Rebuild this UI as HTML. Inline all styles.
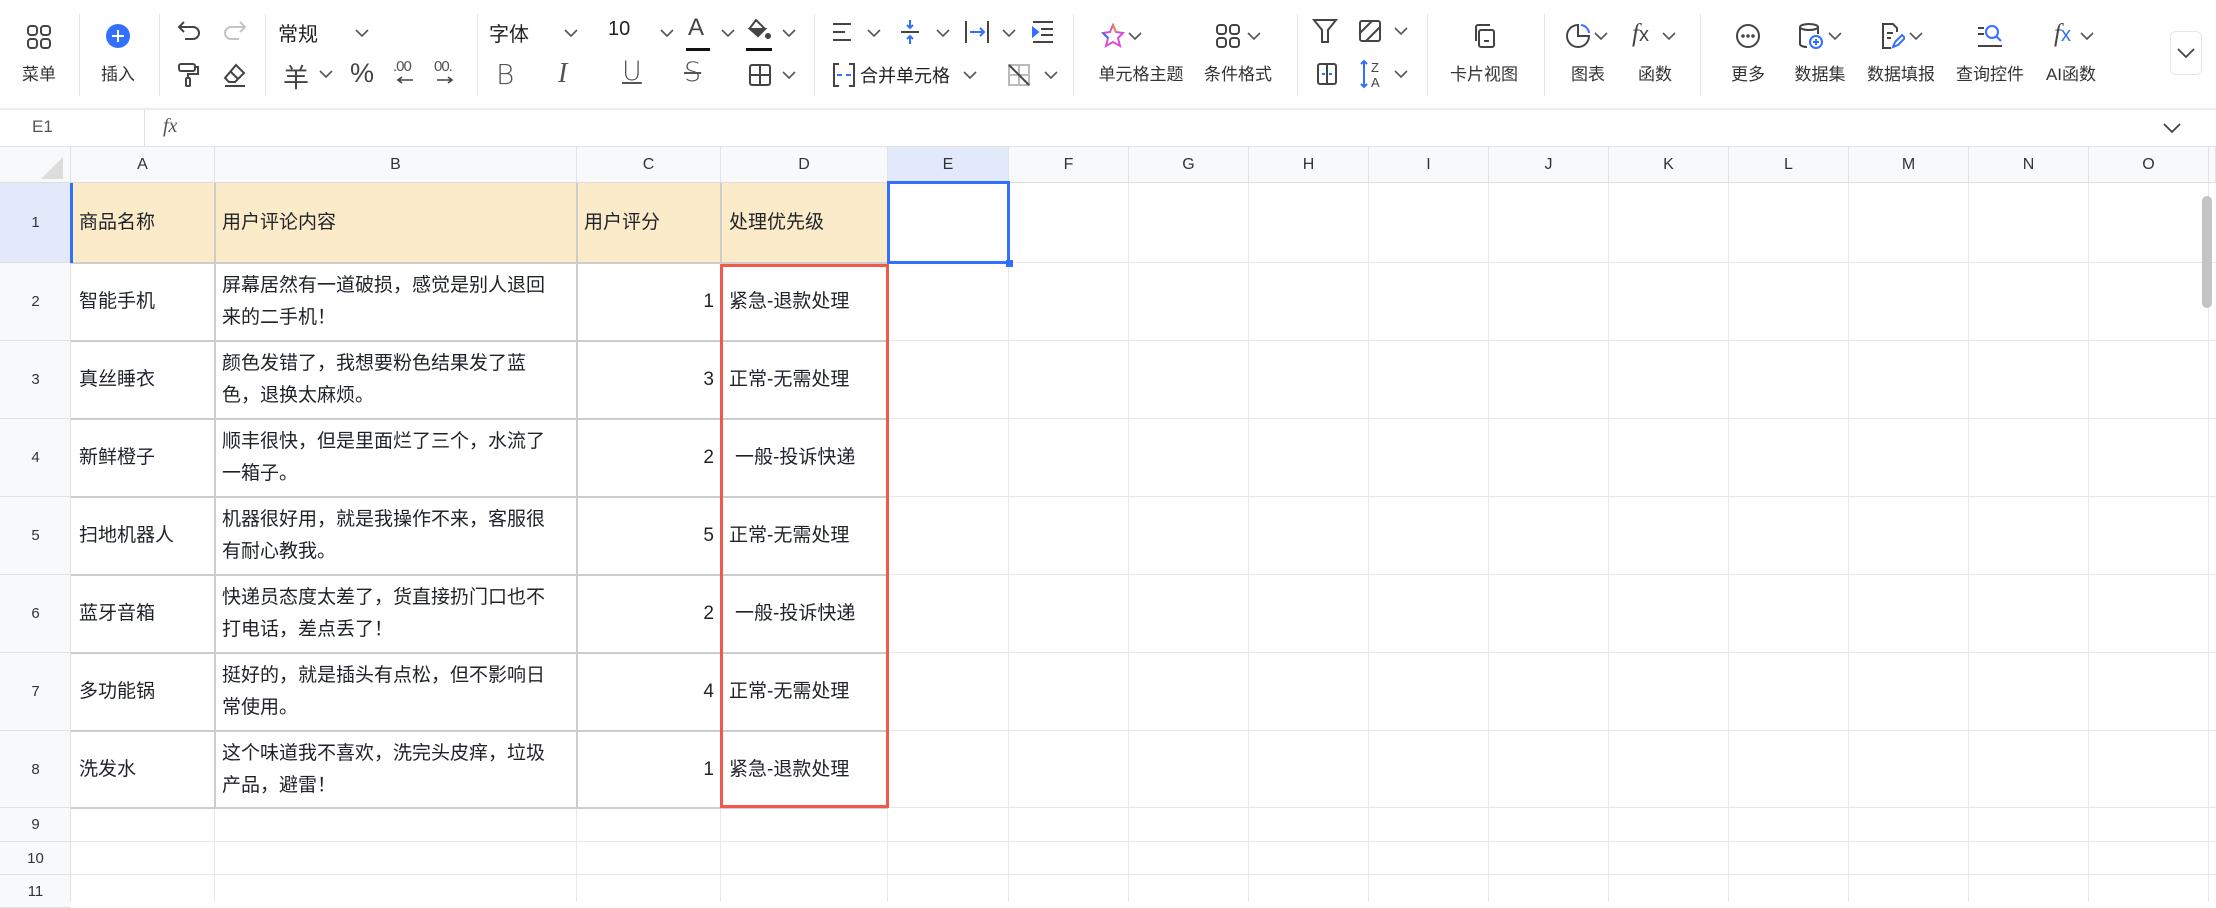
<!DOCTYPE html>
<html><head><meta charset="utf-8"><style>
*{margin:0;padding:0;box-sizing:border-box}
body{width:2216px;height:902px;overflow:hidden;background:#fff;font-family:"Liberation Sans","Noto Sans CJK SC",sans-serif;color:#1f2329;position:relative}
.a{position:absolute}
.lbl{position:absolute;font-size:17px;color:#333;white-space:nowrap;transform:translateX(-50%);top:60px}
.ic{position:absolute;transform:translate(-50%,-50%)}
.sep{position:absolute;top:14px;width:1px;height:82px;background:#e6e6e6}
.ch{position:absolute;top:147px;height:36px;line-height:36px;text-align:center;font-size:16px;color:#333;background:#f8f9fa;border-right:1px solid #e2e2e2}
.rh{position:absolute;left:0;width:71px;text-align:center;font-size:15px;color:#333;background:#f8f9fa;border-bottom:1px solid #e2e2e2}
.vl{position:absolute;top:183px;bottom:0;width:1px;background:#e8e8e8}
.hl{position:absolute;left:71px;right:0;height:1px;background:#e8e8e8}
.c{position:absolute;font-size:19px;color:#1f2329;display:flex;align-items:center;line-height:32px;white-space:nowrap}
</style></head><body>
<div class="a" style="left:0;top:108px;width:2216px;height:2px;background:#ececec"></div>
<div class="sep" style="left:79px"></div><div class="sep" style="left:159px"></div><div class="sep" style="left:265px"></div><div class="sep" style="left:477px"></div><div class="sep" style="left:814px"></div><div class="sep" style="left:1073px"></div><div class="sep" style="left:1297px"></div><div class="sep" style="left:1427px"></div><div class="sep" style="left:1544px"></div><div class="sep" style="left:1700px"></div>

<svg class="ic" style="left:39px;top:37px" width="26" height="26" viewBox="0 0 26 26" fill="none" stroke="#444" stroke-width="2"><rect x="2" y="2" width="9" height="9" rx="3"/><rect x="15" y="2" width="9" height="9" rx="3"/><rect x="2" y="15" width="9" height="9" rx="3"/><rect x="15" y="15" width="9" height="9" rx="3"/></svg>
<div class="lbl" style="left:39px">菜单</div>
<svg class="ic" style="left:118px;top:36px" width="26" height="26" viewBox="0 0 26 26"><circle cx="13" cy="13" r="12" fill="#3370ff"/><path d="M13 7v12M7 13h12" stroke="#fff" stroke-width="2"/></svg>
<div class="lbl" style="left:118px">插入</div>
<svg class="ic" style="left:189px;top:32px" width="26" height="24" viewBox="0 0 26 24" fill="none" stroke="#444" stroke-width="2"><path d="M3 7h14a6 6 0 0 1 0 12H9"/><path d="M8 2L3 7l5 5"/></svg>
<svg class="ic" style="left:235px;top:32px" width="26" height="24" viewBox="0 0 26 24" fill="none" stroke="#c4c4c4" stroke-width="2"><path d="M23 7H9a6 6 0 0 0 0 12h8"/><path d="M18 2l5 5-5 5"/></svg>
<svg class="ic" style="left:189px;top:75px" width="24" height="26" viewBox="0 0 24 26" fill="none" stroke="#444" stroke-width="2"><rect x="2" y="2" width="16" height="7" rx="2"/><path d="M18 5h3v7H11v4"/><rect x="9" y="16" width="4" height="8" rx="1"/></svg>
<svg class="ic" style="left:235px;top:75px" width="26" height="26" viewBox="0 0 26 26" fill="none" stroke="#444" stroke-width="2"><path d="M14 3l8 8-9 9H7l-4-4z"/><path d="M8 9l8 8"/><path d="M3 24h20"/></svg>
<div class="a" style="left:278px;top:18px;font-size:20px;color:#222">常规</div>
<svg class="ic" style="left:362px;top:33px" width="14" height="10" viewBox="0 0 14 10" fill="none" stroke="#555" stroke-width="1.6"><path d="M1 2l6 6 6-6"/></svg>
<div class="a" style="left:283px;top:58px;font-size:26px;color:#444">羊</div>
<svg class="ic" style="left:326px;top:74px" width="14" height="10" viewBox="0 0 14 10" fill="none" stroke="#555" stroke-width="1.6"><path d="M1 2l6 6 6-6"/></svg>
<div class="a" style="left:350px;top:58px;font-size:27px;color:#444">%</div>
<div class="a" style="left:393px;top:58px;font-size:15px;color:#555;letter-spacing:-1px">.00</div>
<svg class="ic" style="left:405px;top:80px" width="20" height="8" viewBox="0 0 20 8" fill="none" stroke="#444" stroke-width="1.6"><path d="M18 4H4M7 1L3 4l4 3"/></svg>
<div class="a" style="left:434px;top:58px;font-size:15px;color:#555;letter-spacing:-1px">00.</div>
<svg class="ic" style="left:445px;top:80px" width="20" height="8" viewBox="0 0 20 8" fill="none" stroke="#444" stroke-width="1.6"><path d="M2 4h14M13 1l4 3-4 3"/></svg>

<div class="a" style="left:489px;top:18px;font-size:20px;color:#222">字体</div>
<svg class="ic" style="left:571px;top:33px" width="14" height="10" viewBox="0 0 14 10" fill="none" stroke="#555" stroke-width="1.6"><path d="M1 2l6 6 6-6"/></svg>
<div class="a" style="left:608px;top:18px;font-size:20px;color:#222">10</div>
<svg class="ic" style="left:667px;top:33px" width="14" height="10" viewBox="0 0 14 10" fill="none" stroke="#555" stroke-width="1.6"><path d="M1 2l6 6 6-6"/></svg>
<div class="a" style="left:688px;top:14px;font-size:24px;color:#444">A</div>
<div class="a" style="left:686px;top:48px;width:24px;height:3px;background:#111"></div>
<svg class="ic" style="left:728px;top:33px" width="14" height="10" viewBox="0 0 14 10" fill="none" stroke="#555" stroke-width="1.6"><path d="M1 2l6 6 6-6"/></svg>
<svg class="ic" style="left:759px;top:30px" width="26" height="24" viewBox="0 0 26 24" fill="none" stroke="#444" stroke-width="2"><path d="M10 2l9 9-7 7-8-8z"/><path d="M4 11h15l-7 7z" fill="#444"/><circle cx="22" cy="18" r="2" fill="#444"/></svg>
<div class="a" style="left:746px;top:48px;width:26px;height:3px;background:#111"></div>
<svg class="ic" style="left:789px;top:33px" width="14" height="10" viewBox="0 0 14 10" fill="none" stroke="#555" stroke-width="1.6"><path d="M1 2l6 6 6-6"/></svg>
<div class="a" style="left:496px;top:58px;font-size:28px;color:#555;font-weight:300;font-family:'DejaVu Sans'">B</div>
<div class="a" style="left:558px;top:58px;font-size:28px;color:#555;font-style:italic;font-family:'Liberation Serif'">I</div>
<div class="a" style="left:622px;top:56px;font-size:27px;color:#555;font-weight:300;text-decoration:underline;font-family:'DejaVu Sans'">U</div>
<div class="a" style="left:684px;top:57px;font-size:27px;color:#555;font-weight:300;text-decoration:line-through;font-family:'DejaVu Sans'">S</div>
<svg class="ic" style="left:760px;top:75px" width="24" height="24" viewBox="0 0 24 24" fill="none" stroke="#444" stroke-width="2"><rect x="2" y="2" width="20" height="20" rx="2"/><path d="M12 2v20M2 12h20"/></svg>
<svg class="ic" style="left:789px;top:75px" width="14" height="10" viewBox="0 0 14 10" fill="none" stroke="#555" stroke-width="1.6"><path d="M1 2l6 6 6-6"/></svg>

<svg class="ic" style="left:842px;top:32px" width="22" height="22" viewBox="0 0 22 22" fill="none" stroke="#444" stroke-width="2"><path d="M2 3h18M2 11h12M2 19h18"/></svg>
<svg class="ic" style="left:874px;top:33px" width="14" height="10" viewBox="0 0 14 10" fill="none" stroke="#555" stroke-width="1.6"><path d="M1 2l6 6 6-6"/></svg>
<svg class="ic" style="left:910px;top:32px" width="22" height="26" viewBox="0 0 22 26" fill="none" stroke="#3370ff" stroke-width="2"><path d="M2 13h18" stroke="#444"/><path d="M11 1v8M8 6l3 3 3-3M11 25v-8M8 20l3-3 3 3"/></svg>
<svg class="ic" style="left:943px;top:33px" width="14" height="10" viewBox="0 0 14 10" fill="none" stroke="#555" stroke-width="1.6"><path d="M1 2l6 6 6-6"/></svg>
<svg class="ic" style="left:977px;top:32px" width="26" height="24" viewBox="0 0 26 24" fill="none" stroke="#444" stroke-width="2"><path d="M2 1v22M24 1v22" stroke="#444"/><path d="M6 12h14M16 8l4 4-4 4" stroke="#3370ff"/></svg>
<svg class="ic" style="left:1009px;top:33px" width="14" height="10" viewBox="0 0 14 10" fill="none" stroke="#555" stroke-width="1.6"><path d="M1 2l6 6 6-6"/></svg>
<svg class="ic" style="left:1043px;top:32px" width="24" height="24" viewBox="0 0 24 24" fill="none" stroke="#444" stroke-width="2"><path d="M2 2h20M10 9h12M10 15h12M2 22h20"/><path d="M2 8l5 4-5 4z" fill="#3370ff" stroke="#3370ff"/></svg>
<svg class="ic" style="left:844px;top:75px" width="24" height="26" viewBox="0 0 24 26" fill="none" stroke="#444" stroke-width="2"><path d="M7 2H2v22h5M17 2h5v22h-5"/><path d="M5 13h5M14 13h5" stroke="#3370ff"/></svg>
<div class="a" style="left:860px;top:62px;font-size:18px;color:#222">合并单元格</div>
<svg class="ic" style="left:970px;top:75px" width="14" height="10" viewBox="0 0 14 10" fill="none" stroke="#555" stroke-width="1.6"><path d="M1 2l6 6 6-6"/></svg>
<svg class="ic" style="left:1019px;top:75px" width="24" height="24" viewBox="0 0 24 24" fill="none" stroke="#bbb" stroke-width="2"><rect x="2" y="2" width="20" height="20"/><path d="M12 2v20M2 12h20"/><path d="M2 2l20 20" stroke="#444"/></svg>
<svg class="ic" style="left:1051px;top:75px" width="14" height="10" viewBox="0 0 14 10" fill="none" stroke="#555" stroke-width="1.6"><path d="M1 2l6 6 6-6"/></svg>

<svg class="ic" style="left:1113px;top:36px" width="26" height="26" viewBox="0 0 26 26" fill="none" stroke-width="2"><path d="M13 2l3 7 7 1-5 5 2 8-7-4-7 4 2-8-5-5 7-1z" stroke="#d94fd1"/><path d="M13 2l3 7" stroke="#f08a2c"/><path d="M3 10l5 5" stroke="#3370ff"/></svg>
<svg class="ic" style="left:1135px;top:36px" width="14" height="10" viewBox="0 0 14 10" fill="none" stroke="#555" stroke-width="1.6"><path d="M1 2l6 6 6-6"/></svg>
<div class="lbl" style="left:1141px">单元格主题</div>
<svg class="ic" style="left:1228px;top:36px" width="26" height="26" viewBox="0 0 26 26" fill="none" stroke="#444" stroke-width="2"><rect x="2" y="2" width="9" height="9" rx="3"/><rect x="15" y="2" width="9" height="9" rx="3"/><rect x="2" y="15" width="9" height="9" rx="3"/><rect x="15" y="15" width="9" height="9" rx="3"/></svg>
<svg class="ic" style="left:1254px;top:36px" width="14" height="10" viewBox="0 0 14 10" fill="none" stroke="#555" stroke-width="1.6"><path d="M1 2l6 6 6-6"/></svg>
<div class="lbl" style="left:1238px">条件格式</div>

<svg class="ic" style="left:1325px;top:31px" width="26" height="26" viewBox="0 0 26 26" fill="none" stroke="#444" stroke-width="2"><path d="M2 2h22l-8 10v12h-6V12z"/></svg>
<svg class="ic" style="left:1370px;top:31px" width="24" height="24" viewBox="0 0 24 24" fill="none" stroke="#444" stroke-width="2"><rect x="2" y="2" width="20" height="20" rx="2"/><path d="M2 14L14 2M8 22L22 8"/></svg>
<svg class="ic" style="left:1401px;top:31px" width="14" height="10" viewBox="0 0 14 10" fill="none" stroke="#555" stroke-width="1.6"><path d="M1 2l6 6 6-6"/></svg>
<svg class="ic" style="left:1327px;top:74px" width="22" height="24" viewBox="0 0 22 24" fill="none" stroke="#444" stroke-width="2"><rect x="2" y="2" width="18" height="20" rx="2"/><path d="M11 2v20"/><path d="M6 12h3M13 12h3" stroke="#3370ff"/></svg>
<svg class="ic" style="left:1372px;top:74px" width="26" height="30" viewBox="0 0 26 30" fill="none" stroke="#3370ff" stroke-width="2"><path d="M5 2v26M2 5l3-3 3 3M2 25l3 3 3-3"/><text x="12" y="13" font-size="13" fill="#444" stroke="none" font-family="Liberation Sans">Z</text><text x="12" y="28" font-size="13" fill="#444" stroke="none" font-family="Liberation Sans">A</text></svg>
<svg class="ic" style="left:1401px;top:74px" width="14" height="10" viewBox="0 0 14 10" fill="none" stroke="#555" stroke-width="1.6"><path d="M1 2l6 6 6-6"/></svg>

<svg class="ic" style="left:1484px;top:36px" width="24" height="26" viewBox="0 0 24 26" fill="none" stroke="#444" stroke-width="2"><path d="M4 18V4a2 2 0 0 1 2-2h12"/><rect x="7" y="7" width="15" height="17" rx="2"/><path d="M12 18h5"/></svg>
<div class="lbl" style="left:1484px">卡片视图</div>

<svg class="ic" style="left:1578px;top:36px" width="26" height="26" viewBox="0 0 26 26" fill="none" stroke-width="2"><path d="M13 2a11 11 0 1 0 11 11H13z" stroke="#444"/><path d="M16 2a9 9 0 0 1 8 8" stroke="#3370ff"/></svg>
<svg class="ic" style="left:1601px;top:36px" width="14" height="10" viewBox="0 0 14 10" fill="none" stroke="#555" stroke-width="1.6"><path d="M1 2l6 6 6-6"/></svg>
<div class="lbl" style="left:1588px">图表</div>
<div class="a" style="left:1632px;top:20px;font-size:25px;color:#444;font-style:italic;font-family:'Liberation Serif'">f<span style="font-style:normal;font-family:'Liberation Sans';font-size:20px">x</span></div>
<svg class="ic" style="left:1669px;top:36px" width="14" height="10" viewBox="0 0 14 10" fill="none" stroke="#555" stroke-width="1.6"><path d="M1 2l6 6 6-6"/></svg>
<div class="lbl" style="left:1655px">函数</div>

<svg class="ic" style="left:1748px;top:36px" width="26" height="26" viewBox="0 0 26 26" fill="none" stroke="#444" stroke-width="2"><circle cx="13" cy="13" r="11"/><circle cx="8" cy="13" r=".8" fill="#444"/><circle cx="13" cy="13" r=".8" fill="#444"/><circle cx="18" cy="13" r=".8" fill="#444"/></svg>
<div class="lbl" style="left:1748px">更多</div>
<svg class="ic" style="left:1811px;top:36px" width="26" height="28" viewBox="0 0 26 28" fill="none" stroke="#444" stroke-width="2"><ellipse cx="11" cy="5" rx="9" ry="3"/><path d="M2 5v17c0 2 4 3 7 3M20 5v7"/><circle cx="18" cy="20" r="6" stroke="#3370ff"/><path d="M18 17v6M15 20h6" stroke="#3370ff"/></svg>
<svg class="ic" style="left:1835px;top:36px" width="14" height="10" viewBox="0 0 14 10" fill="none" stroke="#555" stroke-width="1.6"><path d="M1 2l6 6 6-6"/></svg>
<div class="lbl" style="left:1820px">数据集</div>
<svg class="ic" style="left:1892px;top:36px" width="26" height="28" viewBox="0 0 26 28" fill="none" stroke="#444" stroke-width="2"><path d="M18 10V6l-4-4H4v24h8"/><path d="M8 11h6M8 16h4"/><path d="M14 25l2-5 7-7 3 3-7 7z" stroke="#3370ff"/></svg>
<svg class="ic" style="left:1916px;top:36px" width="14" height="10" viewBox="0 0 14 10" fill="none" stroke="#555" stroke-width="1.6"><path d="M1 2l6 6 6-6"/></svg>
<div class="lbl" style="left:1901px">数据填报</div>
<svg class="ic" style="left:1990px;top:36px" width="28" height="26" viewBox="0 0 28 26" fill="none" stroke-width="2"><path d="M2 5h6M2 11h6M2 23h24" stroke="#444"/><circle cx="16" cy="9" r="6" stroke="#3370ff"/><path d="M20 13l5 5" stroke="#3370ff"/></svg>
<div class="lbl" style="left:1990px">查询控件</div>
<div class="a" style="left:2054px;top:20px;font-size:25px;color:#444;font-style:italic;font-family:'Liberation Serif'">f<span style="font-style:normal;font-family:'Liberation Sans';font-size:20px;color:#3370ff">x</span></div>
<svg class="ic" style="left:2087px;top:36px" width="14" height="10" viewBox="0 0 14 10" fill="none" stroke="#555" stroke-width="1.6"><path d="M1 2l6 6 6-6"/></svg>
<div class="lbl" style="left:2071px">AI函数</div>
<div class="a" style="left:2170px;top:31px;width:32px;height:44px;border:1px solid #e6e6e6;border-radius:6px"></div>
<svg class="ic" style="left:2186px;top:53px" width="18" height="12" viewBox="0 0 18 12" fill="none" stroke="#444" stroke-width="1.8"><path d="M1 2l8 8 8-8"/></svg>

<div class="a" style="left:0;top:110px;width:2216px;height:37px;border-bottom:1px solid #e2e2e2"></div>
<div class="a" style="left:32px;top:117px;font-size:17px;color:#555">E1</div>
<div class="a" style="left:144px;top:110px;width:1px;height:37px;background:#e2e2e2"></div>
<div class="a" style="left:163px;top:115px;font-size:20px;color:#555;font-style:italic;font-family:'Liberation Serif'">fx</div>
<svg class="ic" style="left:2172px;top:128px" width="18" height="12" viewBox="0 0 18 12" fill="none" stroke="#444" stroke-width="1.8"><path d="M1 2l8 8 8-8"/></svg>

<div class="a" style="left:0;top:147px;width:71px;height:36px;background:#f8f9fa;border-right:1px solid #e2e2e2"></div>
<svg class="a" style="left:40px;top:156px" width="24" height="24"><path d="M23 1V23H1z" fill="#dcdcdc"/></svg>
<div class="ch" style="left:71px;width:144px">A</div>
<div class="ch" style="left:215px;width:362px">B</div>
<div class="ch" style="left:577px;width:144px">C</div>
<div class="ch" style="left:721px;width:167px">D</div>
<div class="ch" style="left:888px;width:121px;background:#e1e9fb">E</div>
<div class="ch" style="left:1009px;width:120px">F</div>
<div class="ch" style="left:1129px;width:120px">G</div>
<div class="ch" style="left:1249px;width:120px">H</div>
<div class="ch" style="left:1369px;width:120px">I</div>
<div class="ch" style="left:1489px;width:120px">J</div>
<div class="ch" style="left:1609px;width:120px">K</div>
<div class="ch" style="left:1729px;width:120px">L</div>
<div class="ch" style="left:1849px;width:120px">M</div>
<div class="ch" style="left:1969px;width:120px">N</div>
<div class="ch" style="left:2089px;width:120px">O</div>
<div class="ch" style="left:2209px;width:7px"></div>
<div class="a" style="left:0;top:182px;width:2216px;height:1px;background:#dedede"></div>

<div class="rh" style="top:183px;height:80px;line-height:80px;background:#e1e9fb">1</div>
<div class="rh" style="top:263px;height:78px;line-height:78px">2</div>
<div class="rh" style="top:341px;height:78px;line-height:78px">3</div>
<div class="rh" style="top:419px;height:78px;line-height:78px">4</div>
<div class="rh" style="top:497px;height:78px;line-height:78px">5</div>
<div class="rh" style="top:575px;height:78px;line-height:78px">6</div>
<div class="rh" style="top:653px;height:78px;line-height:78px">7</div>
<div class="rh" style="top:731px;height:77px;line-height:77px">8</div>
<div class="rh" style="top:808px;height:34px;line-height:34px">9</div>
<div class="rh" style="top:842px;height:33px;line-height:33px">10</div>
<div class="rh" style="top:875px;height:33px;line-height:33px">11</div>
<div class="a" style="left:70px;top:183px;width:1px;height:719px;background:#e2e2e2"></div>

<div class="a" style="left:71px;top:183px;width:817px;height:80px;background:#fcebc9"></div>

<div class="vl" style="left:214px"></div><div class="vl" style="left:576px"></div><div class="vl" style="left:720px"></div><div class="vl" style="left:887px"></div><div class="vl" style="left:1008px"></div><div class="vl" style="left:1128px"></div><div class="vl" style="left:1248px"></div><div class="vl" style="left:1368px"></div><div class="vl" style="left:1488px"></div><div class="vl" style="left:1608px"></div><div class="vl" style="left:1728px"></div><div class="vl" style="left:1848px"></div><div class="vl" style="left:1968px"></div><div class="vl" style="left:2088px"></div><div class="vl" style="left:2208px"></div>
<div class="hl" style="top:262px"></div><div class="hl" style="top:340px"></div><div class="hl" style="top:418px"></div><div class="hl" style="top:496px"></div><div class="hl" style="top:574px"></div><div class="hl" style="top:652px"></div><div class="hl" style="top:730px"></div><div class="hl" style="top:807px"></div><div class="hl" style="top:841px"></div><div class="hl" style="top:874px"></div>

<div class="a" style="left:71px;top:262px;width:817px;height:2px;background:#cdcdcd"></div>
<div class="a" style="left:71px;top:340px;width:817px;height:2px;background:#cdcdcd"></div>
<div class="a" style="left:71px;top:418px;width:817px;height:2px;background:#cdcdcd"></div>
<div class="a" style="left:71px;top:496px;width:817px;height:2px;background:#cdcdcd"></div>
<div class="a" style="left:71px;top:574px;width:817px;height:2px;background:#cdcdcd"></div>
<div class="a" style="left:71px;top:652px;width:817px;height:2px;background:#cdcdcd"></div>
<div class="a" style="left:71px;top:730px;width:817px;height:2px;background:#cdcdcd"></div>
<div class="a" style="left:71px;top:807px;width:817px;height:2px;background:#cdcdcd"></div>
<div class="a" style="left:214px;top:183px;width:2px;height:625px;background:#cdcdcd"></div>
<div class="a" style="left:576px;top:183px;width:2px;height:625px;background:#cdcdcd"></div>
<div class="a" style="left:720px;top:183px;width:2px;height:625px;background:#cdcdcd"></div>
<div class="a" style="left:70px;top:183px;width:3px;height:80px;background:#3370ff"></div>

<div class="c" style="left:79px;top:183px;height:80px">商品名称</div>
<div class="c" style="left:222px;top:183px;height:80px">用户评论内容</div>
<div class="c" style="left:584px;top:183px;height:80px">用户评分</div>
<div class="c" style="left:729px;top:183px;height:80px">处理优先级</div>

<div class="c" style="left:79px;top:263px;height:78px">智能手机</div>
<div class="c" style="left:222px;top:263px;height:78px">屏幕居然有一道破损，感觉是别人退回<br>来的二手机！</div>
<div class="c" style="left:577px;width:137px;justify-content:flex-end;top:263px;height:78px">1</div>
<div class="c" style="left:729px;top:263px;height:78px">紧急-退款处理</div>

<div class="c" style="left:79px;top:341px;height:78px">真丝睡衣</div>
<div class="c" style="left:222px;top:341px;height:78px">颜色发错了，我想要粉色结果发了蓝<br>色，退换太麻烦。</div>
<div class="c" style="left:577px;width:137px;justify-content:flex-end;top:341px;height:78px">3</div>
<div class="c" style="left:729px;top:341px;height:78px">正常-无需处理</div>

<div class="c" style="left:79px;top:419px;height:78px">新鲜橙子</div>
<div class="c" style="left:222px;top:419px;height:78px">顺丰很快，但是里面烂了三个，水流了<br>一箱子。</div>
<div class="c" style="left:577px;width:137px;justify-content:flex-end;top:419px;height:78px">2</div>
<div class="c" style="left:735px;top:419px;height:78px">一般-投诉快递</div>

<div class="c" style="left:79px;top:497px;height:78px">扫地机器人</div>
<div class="c" style="left:222px;top:497px;height:78px">机器很好用，就是我操作不来，客服很<br>有耐心教我。</div>
<div class="c" style="left:577px;width:137px;justify-content:flex-end;top:497px;height:78px">5</div>
<div class="c" style="left:729px;top:497px;height:78px">正常-无需处理</div>

<div class="c" style="left:79px;top:575px;height:78px">蓝牙音箱</div>
<div class="c" style="left:222px;top:575px;height:78px">快递员态度太差了，货直接扔门口也不<br>打电话，差点丢了！</div>
<div class="c" style="left:577px;width:137px;justify-content:flex-end;top:575px;height:78px">2</div>
<div class="c" style="left:735px;top:575px;height:78px">一般-投诉快递</div>

<div class="c" style="left:79px;top:653px;height:78px">多功能锅</div>
<div class="c" style="left:222px;top:653px;height:78px">挺好的，就是插头有点松，但不影响日<br>常使用。</div>
<div class="c" style="left:577px;width:137px;justify-content:flex-end;top:653px;height:78px">4</div>
<div class="c" style="left:729px;top:653px;height:78px">正常-无需处理</div>

<div class="c" style="left:79px;top:731px;height:77px">洗发水</div>
<div class="c" style="left:222px;top:731px;height:77px">这个味道我不喜欢，洗完头皮痒，垃圾<br>产品，避雷！</div>
<div class="c" style="left:577px;width:137px;justify-content:flex-end;top:731px;height:77px">1</div>
<div class="c" style="left:729px;top:731px;height:77px">紧急-退款处理</div>

<div class="a" style="left:720px;top:264px;width:169px;height:544px;border:3px solid #f05a4c"></div>
<div class="a" style="left:887px;top:181px;width:123px;height:83px;border:3px solid #3370ff"></div>
<div class="a" style="left:1006px;top:260px;width:7px;height:7px;background:#3370ff"></div>

<div class="a" style="left:2202px;top:196px;width:10px;height:112px;border-radius:5px;background:#c4c4c4"></div>
</body></html>
